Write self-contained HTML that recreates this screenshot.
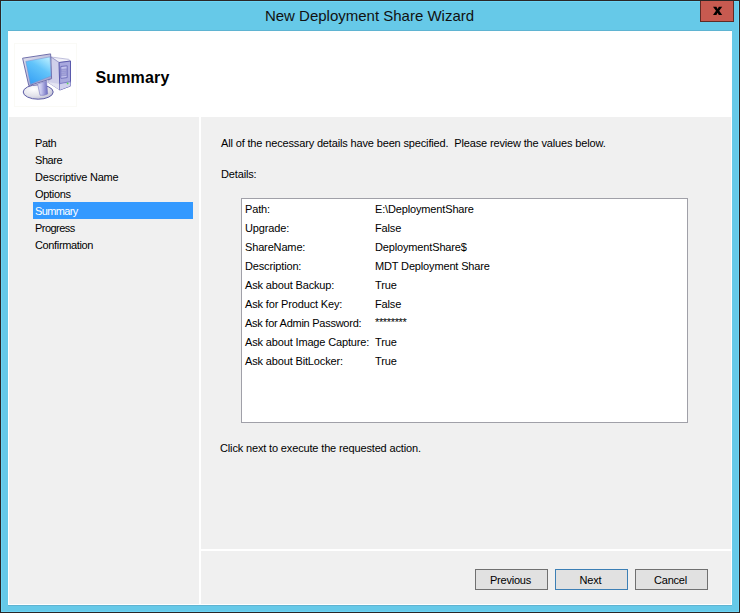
<!DOCTYPE html>
<html><head><meta charset="utf-8">
<style>
*{margin:0;padding:0;box-sizing:border-box}
html,body{width:740px;height:613px;overflow:hidden;background:#2b2626}
body{position:relative;font-family:"Liberation Sans",sans-serif;font-size:11px;color:#000}
.abs{position:absolute}
#frame{left:1px;top:1px;width:738px;height:611px;background:#66c9e8;border:1px solid #6dd5f5}
#title{left:-0.5px;top:7px;width:740px;text-align:center;font-size:15px;color:#111;white-space:pre}
#close{left:700px;top:1px;width:34px;height:21px;background:#c75a50;border:1px solid #5e2b26;border-top:0}
#content{left:8px;top:31px;width:724px;height:574px;background:#fff}
#hdr{left:8px;top:30px;width:724px;height:1px;background:#5fb4d2}
#left{left:9px;top:117px;width:190px;height:487px;background:#f0f0f0}
#right{left:201px;top:117px;width:530px;height:432px;background:#f0f0f0}
#bottom{left:201px;top:551px;width:530px;height:53px;background:#f0f0f0}
.t{position:absolute;white-space:pre;letter-spacing:-0.15px;line-height:13px}
#sel{left:33px;top:202px;width:160px;height:17px;background:#3399ff}
#box{left:241px;top:198px;width:447px;height:225px;background:#fff;border:1px solid #a0a0a8}
.btn{position:absolute;top:569px;width:73px;height:21px;background:#e1e1e1;border:1px solid #707070;text-align:center;line-height:20px;letter-spacing:-0.2px;padding-right:2px}
</style></head><body>
<div id="frame" class="abs"></div>
<div id="title" class="abs">New Deployment Share Wizard</div>
<div id="close" class="abs"><svg width="34" height="21" style="position:absolute;left:-1px;top:0"><path d="M13 5.8 L16.4 5.8 L17.6 7.9 L18.8 5.8 L22.2 5.8 L19.2 9.85 L22.2 13.9 L18.8 13.9 L17.6 11.8 L16.4 13.9 L13 13.9 L16 9.85 Z" fill="#000"/></svg></div>
<div id="content" class="abs"></div>
<div id="hdr" class="abs"></div>
<div class="abs" style="left:8px;top:605px;width:724px;height:1px;background:#5fb4d2"></div>
<div class="abs" style="left:14px;top:43px;width:63px;height:64px;border:1px solid #fafaf6"></div>
<svg class="abs" style="left:10px;top:40px" width="70" height="70" viewBox="10 40 70 70">
  <defs>
    <radialGradient id="gb" cx="0.35" cy="0.3" r="0.8"><stop offset="0" stop-color="#ffffff"/><stop offset="0.6" stop-color="#e2e2ea"/><stop offset="1" stop-color="#b8b8d0"/></radialGradient>
    <linearGradient id="gn" x1="0" y1="0" x2="1" y2="0"><stop offset="0" stop-color="#e0e0f4"/><stop offset="0.35" stop-color="#c8c8ee"/><stop offset="1" stop-color="#6a6abf"/></linearGradient>
    <linearGradient id="gs" x1="0.8" y1="0" x2="0.2" y2="1"><stop offset="0" stop-color="#b4ecff"/><stop offset="0.4" stop-color="#62c4fa"/><stop offset="1" stop-color="#36a0f4"/></linearGradient>
    <linearGradient id="gf" x1="0" y1="0" x2="1" y2="1"><stop offset="0" stop-color="#e4e4ee"/><stop offset="1" stop-color="#9a9acc"/></linearGradient>
  </defs>
  <ellipse cx="38.2" cy="92" rx="15" ry="7.2" fill="url(#gb)" stroke="#5c5ca6" stroke-width="1"/>
  <path d="M37.6 84 L46.5 81 L47.7 94 Q44 96 40 95.2 Z" fill="url(#gn)" stroke="#7a7ac0" stroke-width="0.6"/>
  <path d="M51 57 L68.6 59.3 L70.5 61 L59.1 62.5 Z" fill="#f0f0f8" stroke="#9a9ac8" stroke-width="0.6"/>
  <path d="M51 57 L59.1 62.5 L59.8 90 L47.5 82 L48.8 80.8 Z" fill="#d0d0ea" stroke="#8a8ac0" stroke-width="0.7"/>
  <path d="M47.5 82 L59.8 84 L59.8 90 Z" fill="#e4e4f2"/>
  <path d="M59.1 62.5 L70.5 61 L70.5 86 L59.8 90 Z" fill="#a8a8de" stroke="#5a5aac" stroke-width="1"/>
  <path d="M60.8 66.5 L67.2 65.8 L67.2 77.6 L60.8 78.4 Z" fill="#c4c4ee" stroke="#6c6cb8" stroke-width="0.9"/>
  <path d="M61.4 69.4 L66.6 68.8 L66.6 71.6 L61.4 72.2 Z M61.4 73.2 L66.6 72.6 L66.6 75.4 L61.4 76 Z" fill="#a4a4d8" stroke="#7c7cc4" stroke-width="0.5"/>
  <path d="M59.6 83.6 L70.5 81.6" stroke="#8080c8" stroke-width="1"/>
  <path d="M59.8 84.2 L70.5 82.2 L70.5 86 L59.8 90 Z" fill="#d0d0ee"/>
  <circle cx="67.6" cy="83.4" r="0.9" fill="#5ad65a"/>
  <path d="M22.6 58.2 L50.6 53.9 L51.6 78.7 L28.8 85.6 Z" fill="url(#gf)" stroke="#7070ac" stroke-width="1"/>
  <path d="M25.8 61.4 L50 56.9 L51 76.1 L30.4 84.3 Z" fill="url(#gs)" stroke="#6e8ed0" stroke-width="0.5"/>
</svg>
<div class="t" style="left:95.5px;top:71px;font-size:16px;font-weight:bold;letter-spacing:0.15px">Summary</div>
<div id="left" class="abs"></div>
<div id="right" class="abs"></div>
<div id="bottom" class="abs"></div>
<div id="sel" class="abs"></div>
<div class="t" style="left:35px;top:137px;letter-spacing:-0.35px">Path</div>
<div class="t" style="left:35px;top:154px;letter-spacing:-0.45px">Share</div>
<div class="t" style="left:35px;top:171px;letter-spacing:-0.21px">Descriptive Name</div>
<div class="t" style="left:35px;top:188px;letter-spacing:-0.3px">Options</div>
<div class="t" style="left:35px;top:205px;color:#fff;letter-spacing:-0.65px">Summary</div>
<div class="t" style="left:35px;top:222px;letter-spacing:-0.54px">Progress</div>
<div class="t" style="left:35px;top:239px;letter-spacing:-0.36px">Confirmation</div>
<div class="t" style="left:221px;top:137px">All of the necessary details have been specified.  Please review the values below.</div>
<div class="t" style="left:221px;top:168px">Details:</div>
<div id="box" class="abs"></div>
<div class="t" style="left:245px;top:203px">Path:</div>
<div class="t" style="left:375px;top:203px">E:\DeploymentShare</div>
<div class="t" style="left:245px;top:222px">Upgrade:</div>
<div class="t" style="left:375px;top:222px">False</div>
<div class="t" style="left:245px;top:241px">ShareName:</div>
<div class="t" style="left:375px;top:241px">DeploymentShare$</div>
<div class="t" style="left:245px;top:260px">Description:</div>
<div class="t" style="left:375px;top:260px">MDT Deployment Share</div>
<div class="t" style="left:245px;top:279px">Ask about Backup:</div>
<div class="t" style="left:375px;top:279px">True</div>
<div class="t" style="left:245px;top:298px">Ask for Product Key:</div>
<div class="t" style="left:375px;top:298px">False</div>
<div class="t" style="left:245px;top:317px;letter-spacing:-0.26px">Ask for Admin Password:</div>
<div class="t" style="left:375px;top:316px;letter-spacing:-0.35px">********</div>
<div class="t" style="left:245px;top:336px">Ask about Image Capture:</div>
<div class="t" style="left:375px;top:336px">True</div>
<div class="t" style="left:245px;top:355px">Ask about BitLocker:</div>
<div class="t" style="left:375px;top:355px">True</div>
<div class="t" style="left:220px;top:442px">Click next to execute the requested action.</div>
<div class="btn" style="left:475px">Previous</div>
<div class="btn" style="left:555px;border-color:#3c7fb5">Next</div>
<div class="btn" style="left:635px">Cancel</div>
</body></html>
